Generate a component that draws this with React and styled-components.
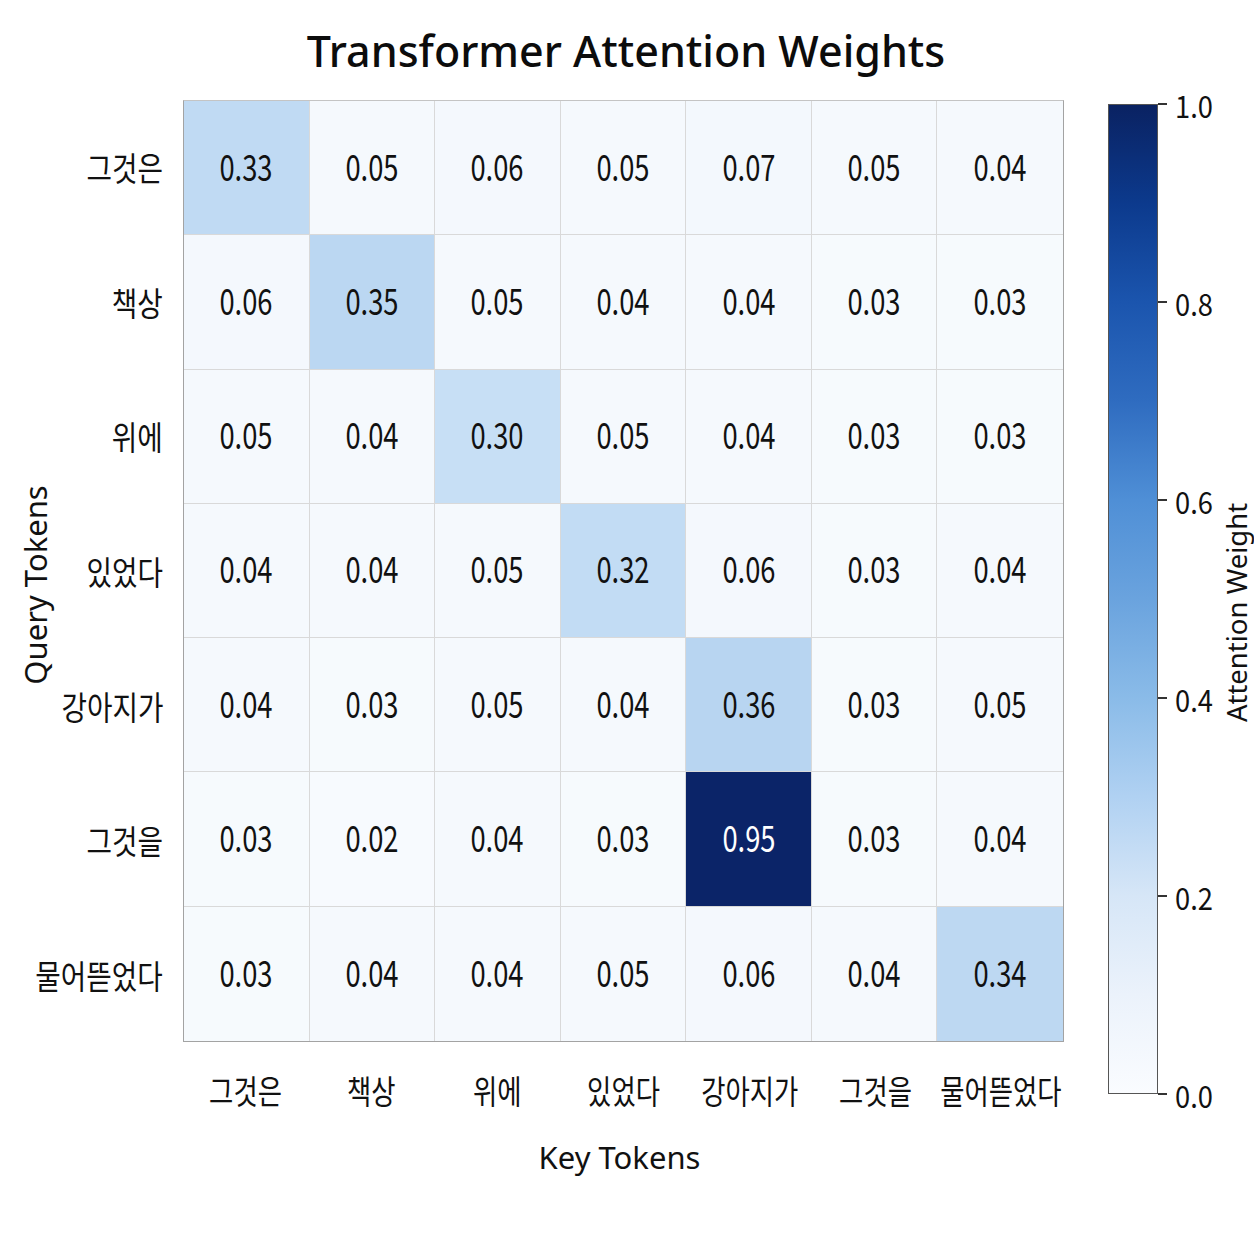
import React from "react";
import styled, { createGlobalStyle } from "styled-components";

const GlobalStyle = createGlobalStyle`
  html, body {
    margin: 0;
    padding: 0;
    background: #fff;
  }
`;

const tokens = ["그것은", "책상", "위에", "있었다", "강아지가", "그것을", "물어뜯었다"];

const weights = [
  [0.33, 0.05, 0.06, 0.05, 0.07, 0.05, 0.04],
  [0.06, 0.35, 0.05, 0.04, 0.04, 0.03, 0.03],
  [0.05, 0.04, 0.3, 0.05, 0.04, 0.03, 0.03],
  [0.04, 0.04, 0.05, 0.32, 0.06, 0.03, 0.04],
  [0.04, 0.03, 0.05, 0.04, 0.36, 0.03, 0.05],
  [0.03, 0.02, 0.04, 0.03, 0.95, 0.03, 0.04],
  [0.03, 0.04, 0.04, 0.05, 0.06, 0.04, 0.34]
];

const ticks = ["1.0", "0.8", "0.6", "0.4", "0.2", "0.0"];

const stops = [
  [0, [248, 251, 254]],
  [0.1, [241, 246, 252]],
  [0.3, [199, 223, 245]],
  [0.36, [184, 213, 241]],
  [0.6, [90, 148, 214]],
  [0.95, [11, 36, 104]],
  [1, [8, 32, 94]]
];

const cellColor = v => {
  for (let i = 1; i < stops.length; i++) {
    const [p0, c0] = stops[i - 1];
    const [p1, c1] = stops[i];
    if (v <= p1) {
      const t = (v - p0) / (p1 - p0);
      const c = c0.map((x, k) => Math.round(x + (c1[k] - x) * t));
      return `rgb(${c.join(",")})`;
    }
  }
  return "rgb(8,32,94)";
};

const narrowFont = `"Noto Sans CJK KR", "Noto Sans", sans-serif`;

/*************************************************************************/

const Figure = styled.div`
  width: 1254px;
  height: 1254px;
  display: grid;
  grid-template-columns: 70px 113px 881px 44px 50px 62px 34px;
  grid-template-rows: 100px 942px 96px 38px;
  background: #fff;
  color: #111;
`;

const Title = styled.h1`
  grid-column: 1 / 8;
  grid-row: 1;
  margin: 0;
  display: flex;
  align-items: center;
  justify-content: center;
  padding-right: 2px;
  font-family: "Noto Sans", sans-serif;
  font-weight: 500;
  font-size: 43px;
  color: #0c0c0c;
`;

const AxisTitle = styled.div`
  display: flex;
  align-items: center;
  justify-content: center;
  font-family: "Noto Sans", sans-serif;
  font-size: ${p => p.$size || 28}px;
  color: #111;
  white-space: nowrap;
  min-width: 0;
`;

const YTitle = styled(AxisTitle)`
  grid-column: 1;
  grid-row: 2;
  & > span {
    display: inline-block;
    transform: rotate(-90deg) translateX(-14px);
  }
`;

const XTitle = styled(AxisTitle)`
  grid-column: 3;
  grid-row: 4;
  padding-right: 8px;
`;

const CbTitle = styled(AxisTitle)`
  grid-column: 7;
  grid-row: 2 / 4;
  align-items: flex-start;
  & > span {
    display: inline-block;
    margin-top: 494px;
    transform: rotate(-90deg);
  }
`;

const RowLabels = styled.div`
  grid-column: 2;
  grid-row: 2;
  display: grid;
  grid-template-rows: repeat(7, 1fr);
  padding-right: 20px;
  min-width: 0;
`;

const ColLabels = styled.div`
  grid-column: 3;
  grid-row: 3;
  display: grid;
  grid-template-columns: repeat(7, 1fr);
`;

const Label = styled.div`
  min-width: 0;
  display: flex;
  align-items: center;
  justify-content: ${p => (p.$end ? "flex-end" : "center")};
  font-family: ${narrowFont};
  font-size: 33px;
  color: #111;
  white-space: nowrap;
  & > span {
    display: inline-block;
    transform: scaleX(${p => (p.$end ? 0.84 : 0.8)});
    transform-origin: ${p => (p.$end ? "right center" : "center")};
  }
`;

const Heatmap = styled.div`
  grid-column: 3;
  grid-row: 2;
  display: grid;
  grid-template-columns: repeat(7, 1fr);
  grid-template-rows: repeat(7, 1fr);
  border: 1px solid #a3a3a3;
  border-top-color: #c4c4c4;
  box-sizing: border-box;
`;

const Cell = styled.div`
  display: flex;
  align-items: center;
  justify-content: center;
  border-right: 1px solid #d9d9d9;
  border-bottom: 1px solid #d9d9d9;
  &:nth-child(7n) {
    border-right: none;
  }
  &:nth-last-child(-n + 7) {
    border-bottom: none;
  }
  font-family: ${narrowFont};
  font-size: 36px;
  color: ${p => (p.$dark ? "#fff" : "#111")};
  & > span {
    display: inline-block;
    transform: translateY(-3px) scaleX(0.76);
  }
`;

const ColorBar = styled.div`
  grid-column: 5;
  grid-row: 2 / 4;
  margin-top: 4px;
  height: 990px;
  box-sizing: border-box;
  border: 1px solid #555;
  background: linear-gradient(
    to bottom,
    #0a2262 0%,
    #0c3a8d 10%,
    #1b55ae 20%,
    #2f6cc0 30%,
    #4f8fd6 40%,
    #6aa3de 50%,
    #8abbe8 60%,
    #b0d1f2 70%,
    #d6e6f7 80%,
    #ebf2fb 90%,
    #fafcff 100%
  );
`;

const TickColumn = styled.div`
  grid-column: 6 / 8;
  grid-row: 2 / 4;
  margin-top: 4px;
  height: 990px;
  display: flex;
  flex-direction: column;
  justify-content: space-between;
`;

const Tick = styled.div`
  height: 0;
  display: flex;
  align-items: center;
  gap: 8px;
  &::before {
    content: "";
    width: 9px;
    height: 1.5px;
    background: #333;
  }
  font-family: ${narrowFont};
  font-size: 31px;
  color: #111;
  & > span {
    display: inline-block;
    transform: scaleX(0.88);
    transform-origin: left center;
  }
`;

/*************************************************************************/

const App = () => {
  return (
    <>
      <GlobalStyle />
      <Figure>
        <Title>Transformer Attention Weights</Title>
        <YTitle $size={31}>
          <span>Query Tokens</span>
        </YTitle>
        <RowLabels>
          {tokens.map(t => (
            <Label key={t} $end>
              <span>{t}</span>
            </Label>
          ))}
        </RowLabels>
        <Heatmap>
          {weights.map((row, r) =>
            row.map((v, c) => (
              <Cell
                key={`${r}-${c}`}
                $dark={v > 0.6}
                style={{ background: cellColor(v) }}
              >
                <span>{v.toFixed(2)}</span>
              </Cell>
            ))
          )}
        </Heatmap>
        <ColLabels>
          {tokens.map(t => (
            <Label key={t}>
              <span>{t}</span>
            </Label>
          ))}
        </ColLabels>
        <XTitle $size={31}>Key Tokens</XTitle>
        <ColorBar />
        <TickColumn>
          {ticks.map(t => (
            <Tick key={t}>
              <span>{t}</span>
            </Tick>
          ))}
        </TickColumn>
        <CbTitle $size={27.5}>
          <span>Attention Weight</span>
        </CbTitle>
      </Figure>
    </>
  );
};

export default App;
